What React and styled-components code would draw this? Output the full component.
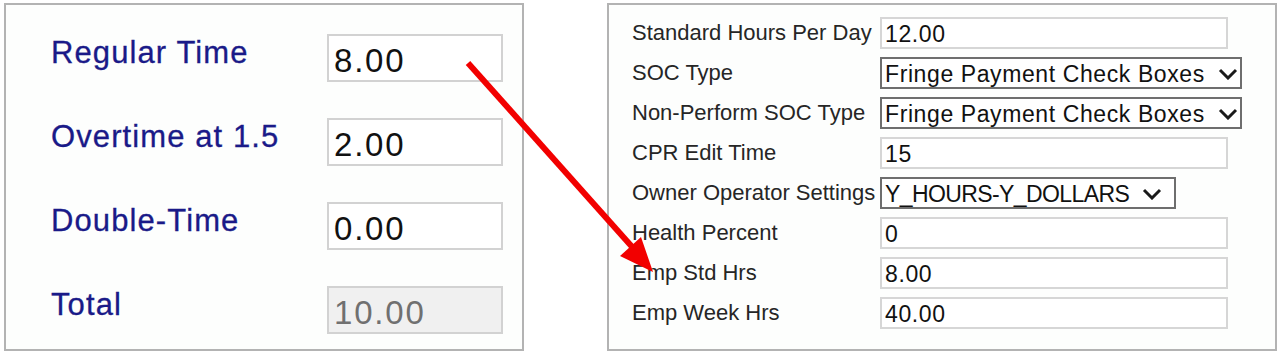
import React from 'react';
import styled, {createGlobalStyle} from 'styled-components';

const GlobalStyle = createGlobalStyle`
  html, body {
    margin: 0;
    padding: 0;
    background: #fff;
  }
  body {
    font-family: "Liberation Sans", Arial, sans-serif;
  }
`;

const Page = styled.div`
  position: relative;
  box-sizing: border-box;
  width: 1279px;
  height: 353px;
  display: flex;
  align-items: flex-start;
  gap: 83px;
  padding: 3px 0 0 4px;
`;

const Panel = styled.section`
  box-sizing: border-box;
  height: 348px;
  border: 2px solid #b3b3b3;
  background: #fdfefd;
  display: grid;
  align-content: start;
`;

const HoursPanel = styled(Panel)`
  width: 520px;
  grid-template-columns: 276px 176px;
  grid-auto-rows: 48px;
  row-gap: 36px;
  padding: 29px 0 0 45px;
`;

const SettingsPanel = styled(Panel)`
  width: 670px;
  grid-template-columns: 248px auto;
  grid-auto-rows: 32px;
  row-gap: 8px;
  padding: 12px 0 0 23px;
`;

const BigLabel = styled.label`
  align-self: start;
  line-height: 38px;
  font-size: 31px;
  letter-spacing: 1.1px;
  color: #1a1a88;
  -webkit-text-stroke: 0.3px #1a1a88;
`;

const BigInput = styled.input`
  box-sizing: border-box;
  width: 176px;
  height: 48px;
  margin: 0;
  padding: 6px 0 0 5px;
  border: 2px solid #d2d2d2;
  background: ${p => (p.disabled ? '#f0f0f0' : '#fff')};
  color: ${p => (p.disabled ? '#707070' : '#111')};
  -webkit-text-fill-color: ${p => (p.disabled ? '#707070' : '#111')};
  font-family: "Liberation Sans", Arial, sans-serif;
  font-size: 33px;
  letter-spacing: 1.8px;
  outline: none;
  opacity: 1;
`;

const Label = styled.label`
  align-self: center;
  font-size: 22px;
  color: #262626;
  white-space: nowrap;
`;

const TextBox = styled.input`
  box-sizing: border-box;
  width: 348px;
  height: 32px;
  margin: 0;
  padding: 2px 0 0 3px;
  border: 2px solid #d6d6d6;
  background: #fff;
  color: #111;
  font-family: "Liberation Sans", Arial, sans-serif;
  font-size: 23px;
  letter-spacing: 0.6px;
  outline: none;
`;

const SelectBox = styled.div`
  box-sizing: border-box;
  width: ${p => p.$width}px;
  height: 32px;
  display: flex;
  align-items: center;
  justify-content: space-between;
  padding: 2px ${p => p.$padRight}px 0 3px;
  border: 2px solid #6e6e6e;
  background: #fff;
  color: #111;
  font-size: 23px;
  letter-spacing: ${p => p.$spacing}px;
  white-space: nowrap;
`;

const Chevron = () => (
  <svg width="20" height="12" viewBox="0 0 20 12">
    <polyline points="2,2 10,10 18,2" fill="none" stroke="#1a1a1a" strokeWidth="3" />
  </svg>
);

const Overlay = styled.svg`
  position: absolute;
  top: 0;
  left: 0;
  pointer-events: none;
`;

const hours = [
  {label: 'Regular Time', value: '8.00'},
  {label: 'Overtime at 1.5', value: '2.00'},
  {label: 'Double-Time', value: '0.00'},
  {label: 'Total', value: '10.00', disabled: true},
];

const settings = [
  {label: 'Standard Hours Per Day', value: '12.00'},
  {label: 'SOC Type', select: 'Fringe Payment Check Boxes', width: 362, pad: 2, spacing: 0.6},
  {label: 'Non-Perform SOC Type', select: 'Fringe Payment Check Boxes', width: 362, pad: 2, spacing: 0.6},
  {label: 'CPR Edit Time', value: '15'},
  {label: 'Owner Operator Settings', select: 'Y_HOURS-Y_DOLLARS', width: 296, pad: 12, spacing: -0.6},
  {label: 'Health Percent', value: '0'},
  {label: 'Emp Std Hrs', value: '8.00'},
  {label: 'Emp Week Hrs', value: '40.00'},
];

export default function App() {
  return (
    <>
      <GlobalStyle />
      <Page>
        <HoursPanel>
          {hours.map(h => (
            <React.Fragment key={h.label}>
              <BigLabel>{h.label}</BigLabel>
              <BigInput readOnly value={h.value} disabled={h.disabled} />
            </React.Fragment>
          ))}
        </HoursPanel>
        <SettingsPanel>
          {settings.map(s => (
            <React.Fragment key={s.label}>
              <Label>{s.label}</Label>
              {s.select
                ? (
                  <SelectBox $width={s.width} $padRight={s.pad} $spacing={s.spacing}>
                    {s.select}
                    <Chevron />
                  </SelectBox>
                )
                : <TextBox readOnly value={s.value} />}
            </React.Fragment>
          ))}
        </SettingsPanel>
        <Overlay width="1279" height="353">
          <line x1="468" y1="63" x2="634" y2="249" stroke="#f20000" strokeWidth="6" />
          <polygon points="653,272 641,237 620,256" fill="#f20000" />
        </Overlay>
      </Page>
    </>
  );
}
